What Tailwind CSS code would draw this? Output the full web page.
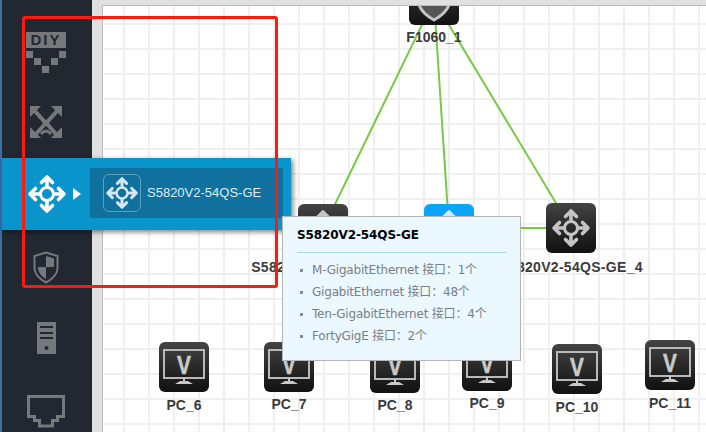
<!doctype html>
<html lang="zh">
<head>
  <meta charset="UTF-8">
  <title>Topology</title>
  <script src="https://cdn.jsdelivr.net/npm/@tailwindcss/browser@4"></script>
</head>
<body class="m-0">
  <svg class="hidden">
    <defs>
      <symbol id="move" viewBox="0 0 50 50">
        <circle cx="25" cy="25" r="6.500" fill="none" stroke="currentColor" stroke-width="3"/>
        <g fill="none" stroke="currentColor" stroke-width="3.600" stroke-linecap="round" stroke-linejoin="round">
          <path d="M25 17V9M19.500 13.500L25 8l5.500 5.500"/>
          <path d="M25 33v8M19.500 36.500L25 42l5.500-5.500"/>
          <path d="M17 25H9M13.500 19.500L8 25l5.500 5.500"/>
          <path d="M33 25h8M36.500 19.500L42 25l-5.500 5.500"/>
        </g>
      </symbol>
      <symbol id="pc" viewBox="0 0 50 50">
        <rect x="5" y="8" width="40" height="28" fill="none" stroke="#b9b9b9" stroke-width="2"/>
        <text transform="translate(25 32) scale(0.8 1)" text-anchor="middle" font-family="'Liberation Sans',sans-serif" font-weight="700" font-size="26" fill="#c9c9c9" stroke="#c9c9c9" stroke-width="0.6">V</text>
        <path d="M24 36h2v3h3l5 3H16l5-3h3z" fill="#c9c9c9"/>
      </symbol>
    </defs>
  </svg>

  <div class="relative flex w-[706px] h-[432px] overflow-hidden bg-[#e0e0e0] font-['Liberation_Sans',sans-serif]">
    <!-- sidebar -->
    <aside class="w-[92px] shrink-0 bg-[#222831] border-l-2 border-[#3a6ea5] flex flex-col pt-[15px] text-[#77787c]">
      <div class="h-[72px] shrink-0 flex flex-col items-center justify-center pr-[2px] pt-[3px]">
        <div class="w-[40px] h-[16px] bg-[#77787c] text-[#222831] text-[15px] leading-[16px] font-bold text-center tracking-[2px] overflow-hidden">DIY</div>
        <svg class="w-[40px] h-[22px] mt-[3px]" viewBox="0 0 40 22" fill="#77787c">
          <rect x="0" y="0" width="7" height="7"/><rect x="33" y="0" width="7" height="7"/>
          <rect x="8" y="7" width="7" height="7"/><rect x="25" y="7" width="7" height="7"/>
          <rect x="16" y="15" width="7" height="7"/>
        </svg>
      </div>
      <div class="h-[72px] shrink-0 flex items-center justify-center pr-[2px] pb-[2px]">
        <svg class="w-[34px] h-[34px]" viewBox="0 0 34 34" fill="none" stroke="#77787c" stroke-width="4">
          <path d="M1 12V1h11z" fill="#77787c" stroke="none"/><path d="M33 12V1H22z" fill="#77787c" stroke="none"/>
          <path d="M1 22v11h11z" fill="#77787c" stroke="none"/><path d="M33 22v11H22z" fill="#77787c" stroke="none"/>
          <path d="M5 5l10 11q2 2 0 4L7 29"/><path d="M29 5L19 16q-2 2 0 4l8 9"/>
          <path d="M12 29q5-6 10 0" stroke-width="3"/>
        </svg>
      </div>
      <div class="h-[72px] shrink-0"></div>
      <div class="h-[72px] shrink-0 flex items-center justify-center pr-[2px]">
        <svg class="w-[26px] h-[33px]" viewBox="0 0 26 33">
          <path d="M13 1.500L24.500 5v12c0 7-5 11-11.500 14.500C6.500 28 1.500 24 1.500 17V5z" fill="none" stroke="#77787c" stroke-width="2"/>
          <path d="M13 5l8 2.500V16h-8zM13 16v12c-4-2.500-8-6-8-12z" fill="#77787c"/>
        </svg>
      </div>
      <div class="h-[72px] shrink-0 flex items-center justify-center pr-[2px] pb-[2px]">
        <svg class="w-[19px] h-[32px]" viewBox="0 0 19 32">
          <path d="M0 0h19v32H0z" fill="#77787c"/>
          <path d="M3 4h13v2H3zM3 10h13v2H3zM3 15h13v2H3z" fill="#222831"/>
          <circle cx="9.500" cy="26" r="2" fill="#222831"/>
        </svg>
      </div>
      <div class="h-[72px] shrink-0 flex justify-center pr-[2px] pt-[20px]">
        <svg class="w-[38px] h-[33px]" viewBox="0 0 38 33">
          <path d="M1.500 1.500h35v20h-6v4h-5v5.500h-13v-5.500h-5v-4h-6z" fill="none" stroke="#77787c" stroke-width="3"/>
        </svg>
      </div>
    </aside>

    <!-- canvas -->
    <main class="flex-1 pl-[10px] pt-[5px]">
      <div class="relative w-full h-full overflow-hidden border-l border-t border-[#bdbdbd] bg-white bg-[linear-gradient(#efefef_2px,transparent_2px),linear-gradient(90deg,#efefef_2px,transparent_2px)] bg-[size:25px_25px] bg-[position:20px_17px]">
        <svg class="absolute left-0 top-0 w-[603px] h-[426px]" viewBox="0 0 603 426" fill="none" stroke="#7ac943" stroke-width="2">
          <path d="M331-6L220 223"/>
          <path d="M331-6L346 223"/>
          <path d="M331-6L468 222"/>
          <path d="M346 222H468"/>
        </svg>

        <!-- F1060 -->
        <div class="absolute left-[306px] top-[-31px] w-[50px] flex flex-col items-center">
          <div class="w-[50px] h-[50px] rounded-md bg-gradient-to-b from-[#444] to-[#111] flex items-center justify-center">
            <svg class="w-[40px] h-[46px]" viewBox="0 0 40 46">
              <path d="M20 3L36 8v14c0 10-7 16-16 21C11 38 4 32 4 22V8z" fill="#555" stroke="#c4c4c4" stroke-width="3"/>
            </svg>
          </div>
          <div class="mt-[4px] whitespace-nowrap text-[14px] leading-[16px] font-bold text-[#3b3b3b]">F1060_1</div>
        </div>

        <!-- switches -->
        <div class="absolute left-[195px] top-[198px] w-[50px] flex flex-col items-center">
          <div class="w-[50px] h-[50px] rounded-md bg-gradient-to-b from-[#444] to-[#111] text-[#c4c4c4]"><svg class="w-[50px] h-[50px]"><use href="#move"/></svg></div>
          <div class="mt-[5px] whitespace-nowrap text-[14px] leading-[16px] tracking-[0.3px] font-bold text-[#3b3b3b]">S5820V2-54QS-GE_2</div>
        </div>
        <div class="absolute left-[321px] top-[198px] w-[50px] flex flex-col items-center">
          <div class="w-[50px] h-[50px] rounded-md bg-[#08a5fb] text-[#cfeaff]"><svg class="w-[50px] h-[50px]"><use href="#move"/></svg></div>
        </div>
        <div class="absolute left-[443px] top-[197px] w-[50px] flex flex-col items-center">
          <div class="w-[50px] h-[50px] rounded-md bg-gradient-to-b from-[#444] to-[#111] text-[#c4c4c4]"><svg class="w-[50px] h-[50px]"><use href="#move"/></svg></div>
          <div class="mt-[6px] whitespace-nowrap text-[14px] leading-[16px] tracking-[0.3px] font-bold text-[#3b3b3b]">S5820V2-54QS-GE_4</div>
        </div>

        <!-- PCs -->
        <div class="absolute left-[56px] top-[336px] w-[50px] flex flex-col items-center">
          <div class="w-[50px] h-[50px] rounded-md bg-gradient-to-b from-[#444] to-[#111]"><svg class="w-[50px] h-[50px]"><use href="#pc"/></svg></div>
          <div class="mt-[5px] whitespace-nowrap text-[14px] leading-[16px] font-bold text-[#3b3b3b]">PC_6</div>
        </div>
        <div class="absolute left-[161px] top-[336px] w-[50px] flex flex-col items-center">
          <div class="w-[50px] h-[50px] rounded-md bg-gradient-to-b from-[#444] to-[#111]"><svg class="w-[50px] h-[50px]"><use href="#pc"/></svg></div>
          <div class="mt-[4px] whitespace-nowrap text-[14px] leading-[16px] font-bold text-[#3b3b3b]">PC_7</div>
        </div>
        <div class="absolute left-[267px] top-[337px] w-[50px] flex flex-col items-center">
          <div class="w-[50px] h-[50px] rounded-md bg-gradient-to-b from-[#444] to-[#111]"><svg class="w-[50px] h-[50px]"><use href="#pc"/></svg></div>
          <div class="mt-[4px] whitespace-nowrap text-[14px] leading-[16px] font-bold text-[#3b3b3b]">PC_8</div>
        </div>
        <div class="absolute left-[359px] top-[335px] w-[50px] flex flex-col items-center">
          <div class="w-[50px] h-[50px] rounded-md bg-gradient-to-b from-[#444] to-[#111]"><svg class="w-[50px] h-[50px]"><use href="#pc"/></svg></div>
          <div class="mt-[4px] whitespace-nowrap text-[14px] leading-[16px] font-bold text-[#3b3b3b]">PC_9</div>
        </div>
        <div class="absolute left-[449px] top-[338px] w-[50px] flex flex-col items-center">
          <div class="w-[50px] h-[50px] rounded-md bg-gradient-to-b from-[#444] to-[#111]"><svg class="w-[50px] h-[50px]"><use href="#pc"/></svg></div>
          <div class="mt-[5px] whitespace-nowrap text-[14px] leading-[16px] font-bold text-[#3b3b3b]">PC_10</div>
        </div>
        <div class="absolute left-[542px] top-[334px] w-[50px] flex flex-col items-center">
          <div class="w-[50px] h-[50px] rounded-md bg-gradient-to-b from-[#444] to-[#111]"><svg class="w-[50px] h-[50px]"><use href="#pc"/></svg></div>
          <div class="mt-[5px] whitespace-nowrap text-[14px] leading-[16px] font-bold text-[#3b3b3b]">PC_11</div>
        </div>
      </div>
    </main>

    <!-- flyout -->
    <div class="absolute left-[2px] top-[158px] w-[289px] h-[72px] bg-[#0a94cc] shadow-[2px_2px_5px_rgba(0,0,0,0.5)] flex items-center">
      <div class="w-[88px] shrink-0 flex items-center pl-[20px] text-white">
        <svg class="w-[50px] h-[50px] shrink-0"><use href="#move"/></svg>
        <svg class="w-[8px] h-[12px] ml-[1px] shrink-0" viewBox="0 0 8 12"><path d="M0 0l8 6-8 6z" fill="#fff"/></svg>
      </div>
      <div class="w-[193px] h-[50px] -mt-[3px] bg-[#10719f] flex items-center pl-[13px]">
        <div class="w-[38px] h-[38px] rounded-md border border-[#5f9fbe] text-[#d4e8f2] flex items-center justify-center">
          <svg class="w-[42px] h-[42px] shrink-0"><use href="#move"/></svg>
        </div>
        <span class="ml-[6px] text-[13px] text-[#dcecf4] whitespace-nowrap">S5820V2-54QS-GE</span>
      </div>
    </div>

    <!-- tooltip -->
    <div class="absolute left-[282px] top-[216px] w-[239px] h-[145px] bg-[#ebf8ff] border border-[#b5b5b5] px-[14px] pt-[9px]">
      <div class="text-[12px] leading-[18px] font-bold tracking-[-0.1px] text-black font-['DejaVu_Sans',sans-serif] pb-[8px] border-b border-[#a8d8e8]">S5820V2-54QS-GE</div>
      <ul class="mt-[6px] text-[12px] leading-[22px] tracking-[-0.2px] text-[#7a7f85] font-['DejaVu_Sans','Noto_Sans_CJK_SC',sans-serif]">
        <li class="flex items-center"><span class="w-[3px] h-[3px] bg-[#8a8a8a] ml-[3px] mr-[9px]"></span>M-GigabitEthernet 接口：1个</li>
        <li class="flex items-center"><span class="w-[3px] h-[3px] bg-[#8a8a8a] ml-[3px] mr-[9px]"></span>GigabitEthernet 接口：48个</li>
        <li class="flex items-center"><span class="w-[3px] h-[3px] bg-[#8a8a8a] ml-[3px] mr-[9px]"></span>Ten-GigabitEthernet 接口：4个</li>
        <li class="flex items-center"><span class="w-[3px] h-[3px] bg-[#8a8a8a] ml-[3px] mr-[9px]"></span>FortyGigE 接口：2个</li>
      </ul>
    </div>

    <!-- red annotation box -->
    <div class="absolute left-[22px] top-[16px] w-[256px] h-[272px] border-[3px] border-[#fb1a10] rounded-[3px] pointer-events-none"></div>
  </div>
</body>
</html>
